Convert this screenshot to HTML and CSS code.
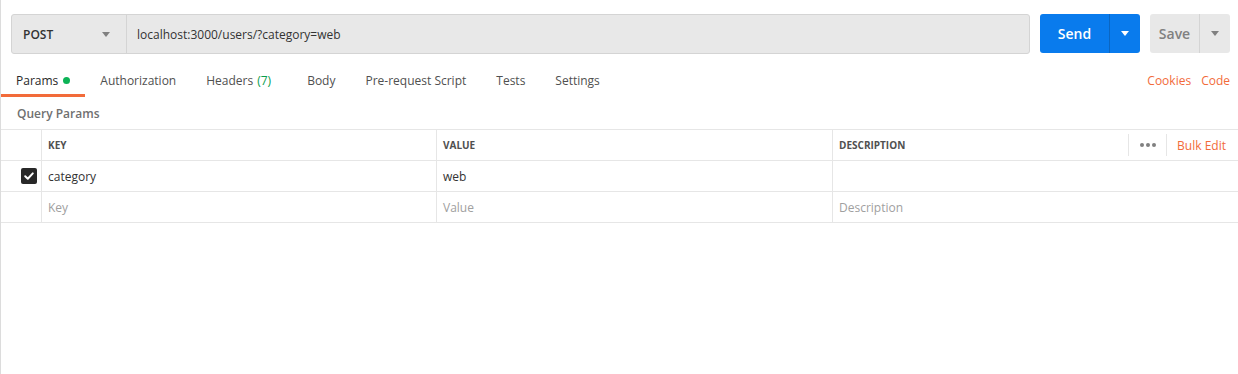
FILE: index.html
```html
<!DOCTYPE html>
<html lang="en">
<head>
    <meta charset="UTF-8">
    <title>Request</title>
    <link rel="stylesheet" href="styles.css">
</head>
<body>
    <div class="request-pane">
        <div class="url-row">
            <div class="url-box">
                <div class="method">
                    <span>POST</span>
                    <span class="caret"></span>
                </div>
                <div class="url-text">localhost:3000/users/?category=web</div>
            </div>
            <div class="split-btn send-btn">
                <span class="btn-label">Send</span>
                <span class="btn-caret"><span class="caret white"></span></span>
            </div>
            <div class="split-btn save-btn">
                <span class="btn-label">Save</span>
                <span class="btn-caret"><span class="caret"></span></span>
            </div>
        </div>
        <div class="tabs">
            <div class="tab active">Params <span class="dot"></span></div>
            <div class="tab">Authorization</div>
            <div class="tab headers-tab">Headers <span class="count">(7)</span></div>
            <div class="tab">Body</div>
            <div class="tab">Pre-request Script</div>
            <div class="tab">Tests</div>
            <div class="tab">Settings</div>
            <div class="tab-links">
                <span>Cookies</span>
                <span>Code</span>
            </div>
        </div>
        <div class="section-title">Query Params</div>
        <div class="params-table">
            <div class="row header">
                <div class="cell check"></div>
                <div class="cell key">KEY</div>
                <div class="cell value">VALUE</div>
                <div class="cell desc">
                    <span>DESCRIPTION</span>
                    <div class="desc-actions">
                        <span class="more">
                            <svg width="18" height="6" viewBox="0 0 18 6"><circle cx="3" cy="3" r="2" fill="#808080"/><circle cx="9" cy="3" r="2" fill="#808080"/><circle cx="15" cy="3" r="2" fill="#808080"/></svg>
                        </span>
                        <span class="bulk">Bulk Edit</span>
                    </div>
                </div>
            </div>
            <div class="row">
                <div class="cell check">
                    <span class="checkbox">
                        <svg width="12" height="12" viewBox="0 0 12 12"><path d="M2.2 6.2 L4.8 8.7 L9.8 3.4" fill="none" stroke="#fff" stroke-width="2" stroke-linecap="round" stroke-linejoin="round"/></svg>
                    </span>
                </div>
                <div class="cell key">category</div>
                <div class="cell value">web</div>
                <div class="cell desc"></div>
            </div>
            <div class="row">
                <div class="cell check"></div>
                <div class="cell key placeholder">Key</div>
                <div class="cell value placeholder">Value</div>
                <div class="cell desc placeholder">Description</div>
            </div>
        </div>
    </div>
</body>
</html>
```

FILE: styles.css
```css
body {
    margin: 0;
    font-family: "Open Sans", "Liberation Sans", sans-serif;
    font-size: 12px;
    color: #333;
    background-color: #fff;
}
.request-pane {
    height: 374px;
    border-left: 1px solid #dcdcdc;
    box-sizing: border-box;
}
.url-row {
    display: flex;
    padding: 14px 8px 0 10px;
    gap: 10px;
}
.url-box {
    flex-grow: 1;
    display: flex;
    height: 40px;
    box-sizing: border-box;
    border: 1px solid #d4d4d4;
    border-radius: 3px;
    background-color: #e8e8e8;
}
.method {
    width: 115px;
    display: flex;
    align-items: center;
    justify-content: space-between;
    padding: 0 16px 0 11px;
    box-sizing: border-box;
    border-right: 1px solid #d4d4d4;
    font-weight: 600;
    font-size: 12px;
    color: #333;
}
.caret {
    width: 0;
    height: 0;
    border-left: 4px solid transparent;
    border-right: 4px solid transparent;
    border-top: 5px solid #808080;
}
.caret.white {
    border-top-color: #fff;
}
.url-text {
    display: flex;
    align-items: center;
    padding-left: 10px;
    color: #333;
}
.split-btn {
    display: flex;
    height: 39px;
    border-radius: 3px;
    font-weight: 600;
    font-size: 14px;
}
.btn-label {
    display: flex;
    align-items: center;
    justify-content: center;
}
.btn-caret {
    display: flex;
    align-items: center;
    justify-content: center;
}
.send-btn {
    width: 100px;
    background-color: #097bed;
    color: #fff;
}
.send-btn .btn-label {
    width: 69px;
    border-right: 1px solid #0a66c2;
}
.send-btn .btn-caret {
    width: 30px;
}
.save-btn {
    width: 80px;
    background-color: #e8e8e8;
    color: #808080;
}
.save-btn .btn-label {
    width: 49px;
    border-right: 1px solid #d4d4d4;
}
.save-btn .btn-caret {
    width: 30px;
}
.tabs {
    display: flex;
    height: 44px;
    margin-top: -1px;
}
.tab {
    display: flex;
    align-items: center;
    padding: 13px 15px 0;
    color: #505050;
    box-sizing: border-box;
    border-bottom: 3px solid transparent;
}
.tab.active {
    color: #282828;
    border-bottom-color: #f26b3a;
}
.headers-tab {
    padding-right: 21px;
}
.dot {
    display: inline-block;
    width: 7px;
    height: 7px;
    border-radius: 50%;
    background-color: #0cb356;
    margin-left: 5px;
}
.count {
    color: #0a9e4d;
    margin-left: 4px;
}
.tab-links {
    margin-left: auto;
    display: flex;
    align-items: center;
    gap: 10px;
    padding: 13px 8px 3px 0;
    color: #f26b3a;
}
.section-title {
    padding: 8px 16px 0;
    height: 24px;
    font-weight: 600;
    color: #707070;
}
.params-table {
    border-top: 1px solid #e6e6e6;
}
.row {
    display: flex;
    height: 31px;
    box-sizing: border-box;
    border-bottom: 1px solid #e6e6e6;
}
.cell {
    display: flex;
    align-items: center;
    box-sizing: border-box;
    padding-left: 6px;
    border-right: 1px solid #e6e6e6;
    color: #333;
}
.cell.check {
    width: 41px;
    justify-content: flex-end;
    padding-right: 4px;
}
.cell.key {
    width: 395px;
}
.cell.value {
    width: 396px;
}
.cell.desc {
    flex-grow: 1;
    border-right: none;
    justify-content: space-between;
}
.header .cell {
    font-size: 10px;
    font-weight: 700;
    color: #505050;
}
.desc-actions {
    display: flex;
    align-items: center;
    height: 22px;
}
.more {
    height: 100%;
    display: flex;
    align-items: center;
    padding: 0 9px 0 10px;
    border-left: 1px solid #e6e6e6;
    border-right: 1px solid #e6e6e6;
}
.bulk {
    padding: 0 12px 0 10px;
    font-size: 12px;
    font-weight: 400;
    color: #f26b3a;
}
.checkbox {
    width: 16px;
    height: 16px;
    border-radius: 2px;
    background-color: #282828;
    display: flex;
    align-items: center;
    justify-content: center;
}
.placeholder {
    color: #a0a0a0;
}
```
